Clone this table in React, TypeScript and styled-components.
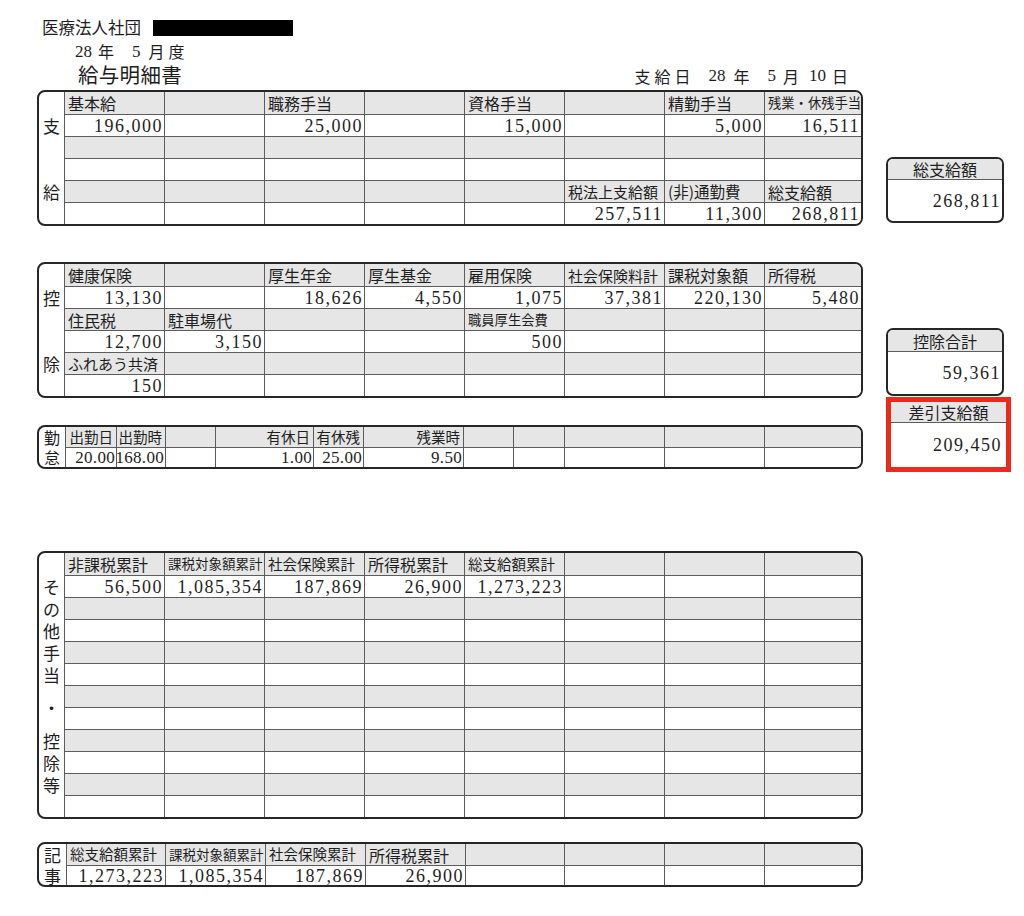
import React from "react";
import styled, { createGlobalStyle } from "styled-components";

const INK = "#262626";
const LINE = "#5c5c5c";
const SHADE = "#e6e6e6";
const NUM_FONT = `"Liberation Serif", "DejaVu Serif", serif`;

const GlobalStyle = createGlobalStyle`
  html, body { margin: 0; padding: 0; background: #fff; }
  body { font-family: "Noto Sans CJK JP", "Noto Sans", sans-serif; color: #1e1e1e; }
  * { box-sizing: border-box; }
`;

const Page = styled.div`
  width: 1024px;
  height: 916px;
  padding-top: 17px;
  overflow: hidden;
  background: #fff;
`;

const Header = styled.header`
  display: flex;
  flex-direction: column;
`;

const OrgLine = styled.div`
  display: flex;
  align-items: center;
  gap: 12px;
  height: 21px;
  padding-left: 42px;
  font-size: 16.5px;
  line-height: 1;
`;

const Redaction = styled.span`
  display: block;
  width: 140px;
  height: 16px;
  background: #000;
`;

const PeriodLine = styled.div`
  display: flex;
  align-items: center;
  height: 22px;
  margin-top: 2px;
  padding-left: 75px;
  font-size: 16px;
  line-height: 1;
`;

const Piece = styled.span<{ $gap: number; $num?: boolean }>`
  margin-left: ${(p) => p.$gap}px;
  font-family: ${(p) => (p.$num ? NUM_FONT : "inherit")};
  font-size: ${(p) => (p.$num ? "17px" : "inherit")};
`;

const TitleRow = styled.div`
  display: flex;
  align-items: center;
  justify-content: space-between;
  width: 850px;
  height: 22px;
  margin-top: 1px;
  padding: 0 2px 0 78px;
`;

const Title = styled.h1`
  margin: 0;
  font-size: 20.5px;
  font-weight: 400;
  line-height: 1;
  letter-spacing: 0.3px;
`;

const PayDate = styled.div`
  display: flex;
  align-items: center;
  margin-top: 3px;
  font-size: 16px;
  line-height: 1;
`;

const Body = styled.main`
  display: flex;
  align-items: flex-start;
  gap: 23px;
  margin-top: 5px;
  padding-left: 37px;
`;

const Tables = styled.div`
  display: flex;
  flex-direction: column;
  width: 826px;
`;

const Sheet = styled.section<{ $gap: number }>`
  display: flex;
  margin-top: ${(p) => p.$gap}px;
  border: 2px solid ${INK};
  border-radius: 8px;
  overflow: hidden;
  background: #fff;
`;

const Side = styled.div<{ $w: number; $rows: string; $size: number }>`
  flex: 0 0 ${(p) => p.$w}px;
  display: grid;
  grid-template-rows: ${(p) => p.$rows};
  font-size: ${(p) => p.$size}px;
  line-height: 1;
`;

const SideChar = styled.span<{ $row: number; $span: number }>`
  grid-row: ${(p) => p.$row} / span ${(p) => p.$span};
  display: flex;
  align-items: center;
  justify-content: center;
`;

const Grid = styled.div<{ $cols: string; $rows: string }>`
  flex: 1;
  display: grid;
  grid-template-columns: ${(p) => p.$cols};
  grid-template-rows: ${(p) => p.$rows};
`;

const Cell = styled.div<{
  $shade: boolean;
  $first: boolean;
  $num: boolean;
  $right: boolean;
  $size: number;
  $ls: number;
}>`
  display: flex;
  align-items: center;
  justify-content: ${(p) => (p.$num || p.$right ? "flex-end" : "flex-start")};
  min-width: 0;
  padding: 0 ${(p) => (p.$num ? 1 : 3)}px 0 3px;
  border-left: 1px solid ${LINE};
  border-top: ${(p) => (p.$first ? "none" : `1px solid ${LINE}`)};
  background: ${(p) => (p.$shade ? SHADE : "#fff")};
  font-family: ${(p) => (p.$num ? NUM_FONT : "inherit")};
  font-size: ${(p) => p.$size}px;
  letter-spacing: ${(p) => (p.$num ? p.$ls : 0)}px;
  line-height: 1;
  white-space: nowrap;
`;

const Totals = styled.aside`
  display: flex;
  flex-direction: column;
  width: 125px;
  padding-top: 67px;
`;

const TotalBox = styled.div<{ $gap: number }>`
  display: flex;
  flex-direction: column;
  width: 118px;
  margin-top: ${(p) => p.$gap}px;
  border: 2px solid ${INK};
  border-radius: 7px;
  overflow: hidden;
`;

const TotalHead = styled.div<{ $h: number }>`
  display: flex;
  align-items: center;
  justify-content: center;
  height: ${(p) => p.$h}px;
  background: ${SHADE};
  border-bottom: 1px solid ${LINE};
  font-size: 16px;
  line-height: 1;
`;

const TotalValue = styled.div<{ $h: number; $pad: number }>`
  display: flex;
  align-items: center;
  justify-content: flex-end;
  height: ${(p) => p.$h}px;
  padding-right: ${(p) => p.$pad}px;
  font-family: ${NUM_FONT};
  font-size: 18px;
  letter-spacing: 1.5px;
  line-height: 1;
`;

const Highlight = styled.div`
  display: flex;
  flex-direction: column;
  width: 125px;
  height: 75px;
  margin-top: 1px;
  border: 5px solid #eb2a1b;
  background: #fff;
`;

type CellDef = string | { t: string; s?: number };

type SideDef = [string, number, number?];

type TableProps = {
  gap: number;
  sideW: number;
  sideSize?: number;
  cols: string;
  rowH: number[];
  side: SideDef[];
  data: CellDef[][];
  shaded: (r: number) => boolean;
  numSize?: number;
  numLs?: number;
  rightLabels?: boolean;
};

const isNum = (t: string) => /^[\d,.]+$/.test(t);

function Table({
  gap,
  sideW,
  sideSize = 17,
  cols,
  rowH,
  side,
  data,
  shaded,
  numSize = 18,
  numLs = 1.5,
  rightLabels = false,
}: TableProps) {
  const rows = rowH.map((h) => `${h}px`).join(" ");
  return (
    <Sheet $gap={gap}>
      <Side $w={sideW} $rows={rows} $size={sideSize}>
        {side.map(([c, r, span]) => (
          <SideChar key={c + r} $row={r} $span={span ?? 1}>
            {c}
          </SideChar>
        ))}
      </Side>
      <Grid $cols={cols} $rows={rows}>
        {data.map((row, ri) =>
          row.map((cell, ci) => {
            const t = typeof cell === "string" ? cell : cell.t;
            const s = typeof cell === "string" ? undefined : cell.s;
            const num = t !== "" && isNum(t);
            return (
              <Cell
                key={`${ri}-${ci}`}
                $shade={shaded(ri)}
                $first={ri === 0}
                $num={num}
                $right={rightLabels}
                $size={num ? numSize : s ?? 16}
                $ls={numLs}
              >
                {t}
              </Cell>
            );
          })
        )}
      </Grid>
    </Sheet>
  );
}

const empty = (n: number): CellDef[] => Array.from({ length: n }, () => "");

const COLS8 = "100px 100px 100px 100px 100px 100px 100px 97px";

const payData: CellDef[][] = [
  ["基本給", "", "職務手当", "", "資格手当", "", "精勤手当", { t: "残業・休残手当", s: 13.3 }],
  ["196,000", "", "25,000", "", "15,000", "", "5,000", "16,511"],
  empty(8),
  empty(8),
  ["", "", "", "", "", { t: "税法上支給額", s: 15 }, { t: "(非)通勤費", s: 15.5 }, "総支給額"],
  ["", "", "", "", "", "257,511", "11,300", "268,811"],
];

const dedData: CellDef[][] = [
  ["健康保険", "", "厚生年金", "厚生基金", "雇用保険", { t: "社会保険料計", s: 15 }, "課税対象額", "所得税"],
  ["13,130", "", "18,626", "4,550", "1,075", "37,381", "220,130", "5,480"],
  ["住民税", "駐車場代", "", "", { t: "職員厚生会費", s: 13.3 }, "", "", ""],
  ["12,700", "3,150", "", "", "500", "", "", ""],
  [{ t: "ふれあう共済", s: 15 }, "", "", "", "", "", "", ""],
  ["150", "", "", "", "", "", "", ""],
];

const attData: CellDef[][] = [
  [{ t: "出勤日", s: 14.5 }, { t: "出勤時", s: 14.5 }, "", { t: "有休日", s: 14.5 }, { t: "有休残", s: 14.5 }, { t: "残業時", s: 14.5 }, "", "", "", "", ""],
  ["20.00", "168.00", "", "1.00", "25.00", "9.50", "", "", "", "", ""],
];

const otherData: CellDef[][] = [
  ["非課税累計", { t: "課税対象額累計", s: 13.5 }, { t: "社会保険累計", s: 14.5 }, "所得税累計", { t: "総支給額累計", s: 14.5 }, "", "", ""],
  ["56,500", "1,085,354", "187,869", "26,900", "1,273,223", "", "", ""],
  ...Array.from({ length: 10 }, () => empty(8)),
];

const noteData: CellDef[][] = [
  [{ t: "総支給額累計", s: 14.5 }, { t: "課税対象額累計", s: 13.5 }, { t: "社会保険累計", s: 14.5 }, "所得税累計", "", "", "", ""],
  ["1,273,223", "1,085,354", "187,869", "26,900", "", "", "", ""],
];

const even = (r: number) => r % 2 === 0;
const firstOnly = (r: number) => r === 0;

export default function App() {
  return (
    <Page>
      <GlobalStyle />
      <Header>
        <OrgLine>
          医療法人社団
          <Redaction />
        </OrgLine>
        <PeriodLine>
          <Piece $gap={0} $num>28</Piece>
          <Piece $gap={6}>年</Piece>
          <Piece $gap={18} $num>5</Piece>
          <Piece $gap={8}>月</Piece>
          <Piece $gap={4}>度</Piece>
        </PeriodLine>
        <TitleRow>
          <Title>給与明細書</Title>
          <PayDate>
            <Piece $gap={0}>支</Piece>
            <Piece $gap={4}>給</Piece>
            <Piece $gap={4}>日</Piece>
            <Piece $gap={18} $num>28</Piece>
            <Piece $gap={8}>年</Piece>
            <Piece $gap={18} $num>5</Piece>
            <Piece $gap={7}>月</Piece>
            <Piece $gap={10} $num>10</Piece>
            <Piece $gap={6}>日</Piece>
          </PayDate>
        </TitleRow>
      </Header>
      <Body>
        <Tables>
          <Table
            gap={0}
            sideW={25}
            cols={COLS8}
            rowH={[22, 22, 22, 22, 22, 22]}
            side={[["支", 2], ["給", 5]]}
            data={payData}
            shaded={even}
          />
          <Table
            gap={36}
            sideW={25}
            cols={COLS8}
            rowH={[22, 22, 22, 22, 22, 22]}
            side={[["控", 2], ["除", 5]]}
            data={dedData}
            shaded={even}
          />
          <Table
            gap={27}
            sideW={26}
            sideSize={16}
            cols="51px 49px 50px 98px 50px 100px 50px 51px 100px 100px 97px"
            rowH={[20, 20]}
            side={[["勤", 1], ["怠", 2]]}
            data={attData}
            shaded={firstOnly}
            numSize={17}
            numLs={0.3}
            rightLabels
          />
          <Table
            gap={82}
            sideW={25}
            cols={COLS8}
            rowH={Array.from({ length: 12 }, () => 22)}
            side={[
              ["そ", 2],
              ["の", 3],
              ["他", 4],
              ["手", 5],
              ["当", 6],
              ["・", 7, 2],
              ["控", 9],
              ["除", 10],
              ["等", 11],
            ]}
            data={otherData}
            shaded={even}
          />
          <Table
            gap={23}
            sideW={27}
            cols="99px 100px 100px 100px 99px 100px 100px 97px"
            rowH={[21, 20]}
            side={[["記", 1], ["事", 2]]}
            data={noteData}
            shaded={firstOnly}
          />
        </Tables>
        <Totals>
          <TotalBox $gap={0}>
            <TotalHead $h={21}>総支給額</TotalHead>
            <TotalValue $h={41} $pad={1}>268,811</TotalValue>
          </TotalBox>
          <TotalBox $gap={105}>
            <TotalHead $h={22}>控除合計</TotalHead>
            <TotalValue $h={42} $pad={1}>59,361</TotalValue>
          </TotalBox>
          <Highlight>
            <TotalHead $h={21}>差引支給額</TotalHead>
            <TotalValue $h={44} $pad={4}>209,450</TotalValue>
          </Highlight>
        </Totals>
      </Body>
    </Page>
  );
}
